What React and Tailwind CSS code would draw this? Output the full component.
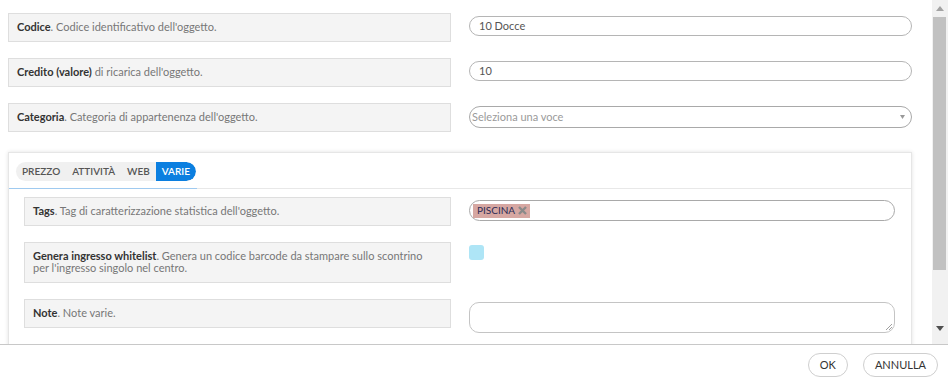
import React from 'react';

const font = { fontFamily: 'Lato, "Open Sans", sans-serif' };

function Label({ title, children, className = '' }) {
  return (
    <div className={`min-h-[29px] bg-[#f4f4f4] border border-[#dedede] px-[8px] pt-[7px] pb-[8px] text-[11px] leading-[12px] text-[#777] ${className}`}>
      <span className="font-bold text-[#333]">{title}</span>
      {children}
    </div>
  );
}

function TextInput({ value }) {
  return (
    <div className="h-[20px] w-full rounded-full border border-[#b5b5b5] px-[9px] text-[11px] leading-[18px] text-[#555]">
      {value}
    </div>
  );
}

function Scrollbar() {
  return (
    <div className="w-[16px] shrink-0 bg-[#f1f1f1] flex flex-col items-stretch">
      <div className="h-[17px] flex items-center justify-center">
        <svg width="8" height="5" viewBox="0 0 8 5"><path d="M4 0 L8 5 L0 5 Z" fill="#a3a3a3" /></svg>
      </div>
      <div className="h-[253px] ml-[1px] mr-[2px] bg-[#c1c1c1]" />
      <div className="flex-1 flex items-end justify-center pb-[13px]">
        <svg width="8" height="5" viewBox="0 0 8 5"><path d="M0 0 L8 0 L4 5 Z" fill="#505050" /></svg>
      </div>
    </div>
  );
}

export default function App() {
  const tabs = ['PREZZO', 'ATTIVITÀ', 'WEB'];

  return (
    <div className="w-[948px] h-[387px] bg-white flex flex-col overflow-hidden" style={font}>
      {/* Scroll area */}
      <div className="h-[344px] flex">
        <div className="flex-1 overflow-hidden pl-[8px] pr-[20px] pt-[13px]">
          {/* Top rows */}
          <div className="flex flex-col gap-[16px]">
            <div className="flex items-start gap-[18px]">
              <Label title="Codice" className="w-[443px] shrink-0">. Codice identificativo dell'oggetto.</Label>
              <div className="flex-1 pt-[3px]">
                <TextInput value="10 Docce" />
              </div>
            </div>
            <div className="flex items-start gap-[18px]">
              <Label title="Credito (valore)" className="w-[443px] shrink-0"> di ricarica dell'oggetto.</Label>
              <div className="flex-1 pt-[3px]">
                <TextInput value="10" />
              </div>
            </div>
            <div className="flex items-start gap-[18px]">
              <Label title="Categoria" className="w-[443px] shrink-0">. Categoria di appartenenza dell'oggetto.</Label>
              <div className="flex-1 pt-[3px]">
                <div className="h-[22px] w-full rounded-full border border-[#a9a9a9] pl-[2px] pr-[6px] flex items-center justify-between text-[11px] text-[#9a9a9a]">
                  <span>Seleziona una voce</span>
                  <svg width="5" height="4" viewBox="0 0 5 4"><path d="M0 0 L5 0 L2.5 4 Z" fill="#999" /></svg>
                </div>
              </div>
            </div>
          </div>

          {/* Tabbed panel */}
          <div className="mt-[20px] border border-[#e6e6e6] shadow-[0_0_4px_rgba(0,0,0,0.12)] bg-white pb-[40px]">
            <div className="pt-[9px] pb-[7px] pl-[7px] flex">
              <div className="flex h-[19px] rounded-full bg-[#f0f0f0] overflow-hidden text-[10px] font-semibold text-[#555]">
                {tabs.map((t) => (
                  <span key={t} className="px-[6px] leading-[19px]">{t}</span>
                ))}
                <span className="px-[6px] leading-[19px] bg-[#0b7fe0] text-white rounded-r-full">VARIE</span>
              </div>
            </div>
            <div className="flex border-t border-[#e8e8e8]">
              <div className="w-[188px] h-[1px] -mt-[1px] bg-[#9fcaf0]" />
            </div>

            <div className="pl-[15px] pr-[16px] pt-[8px] flex flex-col gap-[16px]">
              <div className="flex items-start gap-[18px]">
                <Label title="Tags" className="w-[427px] shrink-0">. Tag di caratterizzazione statistica dell'oggetto.</Label>
                <div className="flex-1 pt-[3px]">
                  <div className="h-[21px] w-full rounded-full border border-[#a9a9a9] pl-[3px] flex items-center">
                    <span className="h-[14px] bg-[#d6a7a2] pl-[4px] pr-[2px] flex items-center gap-[2px] text-[10px] text-[#2b2b55]">
                      PISCINA
                      <svg width="11" height="11" viewBox="0 0 11 11">
                        <path d="M2 2 L9 9 M9 2 L2 9" stroke="#8a8a8a" strokeWidth="2.4" />
                      </svg>
                    </span>
                  </div>
                </div>
              </div>

              <div className="flex items-start gap-[18px]">
                <Label title="Genera ingresso whitelist" className="w-[427px] shrink-0">
                  . Genera un codice barcode da stampare sullo scontrino
                  <br />
                  per l'ingresso singolo nel centro.
                </Label>
                <div className="flex-1 pt-[3px]">
                  <div className="w-[15px] h-[15px] rounded-[3px] bg-[#aee5f6]" />
                </div>
              </div>

              <div className="flex items-start gap-[18px]">
                <Label title="Note" className="w-[427px] shrink-0">. Note varie.</Label>
                <div className="flex-1 pt-[3px]">
                  <div className="relative h-[31px] w-full rounded-[10px] border border-[#c4c4c4]">
                    <svg className="absolute right-[1px] bottom-[1px]" width="8" height="8" viewBox="0 0 8 8">
                      <path d="M7 1 L1 7 M7 4 L4 7" stroke="#888" strokeWidth="0.8" />
                    </svg>
                  </div>
                </div>
              </div>
            </div>
          </div>
        </div>
        <Scrollbar />
      </div>

      {/* Footer */}
      <div className="flex-1 border-t border-[#c8c8c8] flex items-start justify-end gap-[15px] pt-[8px] pr-[10px]">
        <button className="h-[24px] px-[11px] rounded-full border border-[#cfcfcf] bg-white text-[11px] text-[#333]">OK</button>
        <button className="h-[24px] px-[11px] rounded-full border border-[#cfcfcf] bg-white text-[11px] text-[#333]">ANNULLA</button>
      </div>
    </div>
  );
}
